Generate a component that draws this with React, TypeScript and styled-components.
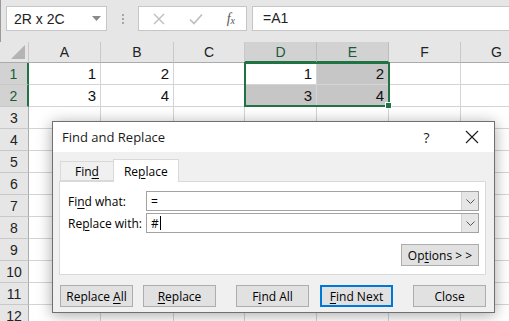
import React from 'react';
import styled, {createGlobalStyle} from 'styled-components';

const columns = ['A', 'B', 'C', 'D', 'E', 'F', 'G'];
const colWidths = [29, 72, 73, 71, 72, 72, 72, 72];
const rows = 12;

const values: Record<string, string> = {
    A1: '1', B1: '2', D1: '1', E1: '2',
    A2: '3', B2: '4', D2: '3', E2: '4',
};

const selectedCols = ['D', 'E'];
const selectedRows = [1, 2];

const GlobalStyle = createGlobalStyle`
  html, body {
    margin: 0;
    padding: 0;
    overflow: hidden;
    background: #ffffff;
  }
`;

const Uline = styled.span`
  text-decoration: underline;
  text-underline-offset: 2px;
`;

// label with one access-key letter underlined
const ul = (text: string, index: number) => (
    <span>
        {text.slice(0, index)}
        <Uline>{text[index]}</Uline>
        {text.slice(index + 1)}
    </span>
);

const ChevronDown = () => (
    <svg width="9" height="5" viewBox="0 0 9 5">
        <path d="M0.5 0.5 L4.5 4.5 L8.5 0.5" stroke="#555" fill="none"/>
    </svg>
);

export default function App() {
    return (
        <Screen>
            <GlobalStyle/>
            <FormulaBar>
                <NameBox>
                    <span>2R x 2C</span>
                    <svg width="9" height="5" viewBox="0 0 9 5">
                        <path d="M0 0 H9 L4.5 5 Z" fill="#8a8a8a"/>
                    </svg>
                </NameBox>
                <Grip>
                    <i/><i/><i/>
                </Grip>
                <FxBox>
                    <svg width="12" height="12" viewBox="0 0 12 12">
                        <path d="M1 1 L11 11 M11 1 L1 11" stroke="#bdbdbd" strokeWidth="1.4"/>
                    </svg>
                    <svg width="14" height="12" viewBox="0 0 14 12">
                        <path d="M1 6.5 L5 10.5 L13 1.5" stroke="#bdbdbd" strokeWidth="1.6" fill="none"/>
                    </svg>
                    <FxText>f<sub>x</sub></FxText>
                </FxBox>
                <FormulaInput>=A1</FormulaInput>
            </FormulaBar>

            <Sheet>
                <Corner>
                    <svg width="14" height="14" viewBox="0 0 14 14">
                        <path d="M14 0 V14 H0 Z" fill="#b4b4b4"/>
                    </svg>
                </Corner>
                {columns.map(c => (
                    <ColHeader key={c} $selected={selectedCols.includes(c)}>{c}</ColHeader>
                ))}
                {Array.from({length: rows}, (_, i) => i + 1).map(r => (
                    <React.Fragment key={r}>
                        <RowHeader $selected={selectedRows.includes(r)}>{r}</RowHeader>
                        {columns.map(c => {
                            const id = c + r;
                            const inRange = selectedCols.includes(c) && selectedRows.includes(r);
                            return (
                                <Cell key={id} $shaded={inRange && id !== 'D1'}>
                                    {values[id]}
                                </Cell>
                            );
                        })}
                    </React.Fragment>
                ))}
                <Selection>
                    <FillHandle/>
                </Selection>
            </Sheet>

            <Dialog>
                <TitleBar>
                    <Title>Find and Replace</Title>
                    <TitleButton>?</TitleButton>
                    <TitleButton>
                        <svg width="14" height="14" viewBox="0 0 14 14">
                            <path d="M1 1 L13 13 M13 1 L1 13" stroke="#1a1a1a" strokeWidth="1.1"/>
                        </svg>
                    </TitleButton>
                </TitleBar>
                <DialogBody>
                    <Tabs>
                        <Tab>{ul('Find', 3)}</Tab>
                        <Tab $active>{ul('Replace', 2)}</Tab>
                    </Tabs>
                    <Panel>
                        <FieldRow>
                            <Label>{ul('Find what:', 2)}</Label>
                            <Combo>
                                <ComboText>=</ComboText>
                                <ComboArrow><ChevronDown/></ComboArrow>
                            </Combo>
                        </FieldRow>
                        <FieldRow>
                            <Label>{ul('Replace with:', 2)}</Label>
                            <Combo>
                                <ComboText>#<Caret/></ComboText>
                                <ComboArrow><ChevronDown/></ComboArrow>
                            </Combo>
                        </FieldRow>
                        <OptionsRow>
                            <DlgButton $width={78}>{ul('Options > >', 2)}</DlgButton>
                        </OptionsRow>
                    </Panel>
                    <ButtonRow>
                        <DlgButton>{ul('Replace All', 8)}</DlgButton>
                        <DlgButton $gap={10}>{ul('Replace', 0)}</DlgButton>
                        <DlgButton $gap={20}>{ul('Find All', 1)}</DlgButton>
                        <DlgButton $gap={11} $default>{ul('Find Next', 0)}</DlgButton>
                        <DlgButton $gap={20}>Close</DlgButton>
                    </ButtonRow>
                </DialogBody>
            </Dialog>
        </Screen>
    );
}

const Screen = styled.div`
  position: relative;
  width: 509px;
  height: 321px;
  overflow: hidden;
  background: #ffffff;
  font-family: "Liberation Sans", Arial, sans-serif;
`;

const FormulaBar = styled.div`
  display: flex;
  align-items: flex-start;
  height: 42px;
  box-sizing: border-box;
  padding: 6px 0 0 6px;
  background: #e6e6e6;
  border-left: 1px solid #9a9a9a;
`;

const NameBox = styled.div`
  display: flex;
  align-items: center;
  justify-content: space-between;
  width: 101px;
  height: 25px;
  box-sizing: border-box;
  padding: 0 5px 0 7px;
  background: #ffffff;
  border: 1px solid #c6c6c6;
  font-size: 14px;
  color: #222;
  margin-left: -1px;
`;

const Grip = styled.div`
  display: flex;
  flex-direction: column;
  gap: 2px;
  width: 31px;
  align-items: center;
  padding-top: 8px;

  i {
    width: 2px;
    height: 2px;
    background: #a6a6a6;
  }
`;

const FxBox = styled.div`
  display: flex;
  align-items: center;
  justify-content: space-between;
  width: 109px;
  height: 25px;
  box-sizing: border-box;
  padding: 0 11px 0 14px;
  background: #ffffff;
  border: 1px solid #c6c6c6;
`;

const FxText = styled.span`
  font-family: "Liberation Serif", "Times New Roman", serif;
  font-style: italic;
  font-size: 14px;
  color: #555;

  sub {
    font-size: 10px;
    vertical-align: -1px;
  }
`;

const FormulaInput = styled.div`
  flex: 1;
  height: 25px;
  box-sizing: border-box;
  margin-left: 5px;
  padding: 3px 0 0 10px;
  background: #ffffff;
  border: 1px solid #c6c6c6;
  border-right: none;
  font-size: 14px;
  color: #222;
`;

const Sheet = styled.div`
  position: relative;
  display: grid;
  grid-template-columns: ${colWidths.map(w => w + 'px').join(' ')};
  grid-template-rows: 21px repeat(${rows}, 22px);
`;

const Corner = styled.div`
  display: flex;
  align-items: flex-end;
  justify-content: flex-end;
  padding: 0 3px 3px 0;
  background: #e6e6e6;
  border-right: 1px solid #c8c8c8;
  border-bottom: 1px solid #ababab;
`;

const ColHeader = styled.div<{ $selected?: boolean }>`
  display: flex;
  align-items: center;
  justify-content: center;
  box-sizing: border-box;
  background: ${p => (p.$selected ? '#d2d2d2' : '#e6e6e6')};
  color: ${p => (p.$selected ? '#185c37' : '#222')};
  border-right: 1px solid ${p => (p.$selected ? '#bdbdbd' : '#c8c8c8')};
  border-bottom: ${p => (p.$selected ? '2px solid #217346' : '1px solid #ababab')};
  font-size: 14px;
`;

const RowHeader = styled.div<{ $selected?: boolean }>`
  display: flex;
  align-items: center;
  justify-content: center;
  box-sizing: border-box;
  background: ${p => (p.$selected ? '#d2d2d2' : '#e6e6e6')};
  color: ${p => (p.$selected ? '#185c37' : '#222')};
  border-right: ${p => (p.$selected ? '2px solid #217346' : '1px solid #ababab')};
  border-bottom: 1px solid #c8c8c8;
  font-size: 14px;
`;

const Cell = styled.div<{ $shaded?: boolean }>`
  display: flex;
  align-items: center;
  justify-content: flex-end;
  box-sizing: border-box;
  padding-right: 4px;
  background: ${p => (p.$shaded ? '#c6c6c6' : '#ffffff')};
  border-right: 1px solid #d4d4d4;
  border-bottom: 1px solid #d4d4d4;
  font-size: 15px;
  color: #111;
`;

const Selection = styled.div`
  position: absolute;
  left: 244px;
  top: 20px;
  width: 146px;
  height: 45px;
  border: 2px solid #217346;
  box-sizing: border-box;
  pointer-events: none;
`;

const FillHandle = styled.div`
  position: absolute;
  right: -4px;
  bottom: -4px;
  width: 5px;
  height: 5px;
  background: #217346;
  border: 1px solid #ffffff;
`;

const Dialog = styled.div`
  position: absolute;
  left: 52px;
  top: 121px;
  width: 443px;
  height: 192px;
  box-sizing: border-box;
  border: 1px solid #707070;
  background: #f0f0f0;
  box-shadow: 0 2px 14px rgba(0, 0, 0, 0.35);
  font-family: "Open Sans", "Noto Sans", sans-serif;
  font-size: 12px;
  color: #000;
  display: flex;
  flex-direction: column;
`;

const TitleBar = styled.div`
  display: flex;
  align-items: center;
  height: 30px;
  background: #ffffff;
  padding-left: 9px;
`;

const Title = styled.div`
  flex: 1;
  font-size: 13px;
  color: #1a1a1a;
`;

const TitleButton = styled.div`
  width: 45px;
  display: flex;
  justify-content: center;
  font-size: 14px;
  color: #1a1a1a;
`;

const DialogBody = styled.div`
  flex: 1;
  padding: 7px 8px 0 6px;
`;

const Tabs = styled.div`
  display: flex;
  align-items: flex-end;
  height: 22px;
  padding-left: 1px;
`;

const Tab = styled.div<{ $active?: boolean }>`
  display: flex;
  align-items: center;
  justify-content: center;
  box-sizing: border-box;
  height: ${p => (p.$active ? '23px' : '20px')};
  padding: 0 ${p => (p.$active ? '10px' : '14px')};
  margin-bottom: ${p => (p.$active ? '-1px' : '0')};
  background: ${p => (p.$active ? '#ffffff' : '#f0f0f0')};
  border: 1px solid #d9d9d9;
  border-bottom: ${p => (p.$active ? 'none' : '1px solid #d9d9d9')};
  border-right: ${p => (p.$active ? '1px solid #d9d9d9' : 'none')};
  position: relative;
  z-index: ${p => (p.$active ? 1 : 0)};
`;

const Panel = styled.div`
  height: 94px;
  box-sizing: border-box;
  background: #ffffff;
  border: 1px solid #d9d9d9;
  padding: 9px 6px 0 8px;
  display: flex;
  flex-direction: column;
  gap: 2px;
`;

const FieldRow = styled.div`
  display: flex;
  align-items: center;
`;

const Label = styled.div`
  width: 78px;
`;

const Combo = styled.div`
  flex: 1;
  display: flex;
  height: 20px;
  box-sizing: border-box;
  border: 1px solid #a2a2a2;
  background: #ffffff;
`;

const ComboText = styled.div`
  flex: 1;
  display: flex;
  align-items: center;
  padding-left: 4px;
`;

const Caret = styled.span`
  display: inline-block;
  width: 1px;
  height: 14px;
  background: #000;
  margin-left: 1px;
`;

const ComboArrow = styled.div`
  width: 16px;
  display: flex;
  align-items: center;
  justify-content: center;
  background: #e6e6e6;
  border-left: 1px solid #cfcfcf;
`;

const OptionsRow = styled.div`
  display: flex;
  justify-content: flex-end;
  margin-top: 9px;
`;

const ButtonRow = styled.div`
  display: flex;
  padding: 10px 0 0 1px;
`;

const DlgButton = styled.div<{ $width?: number; $gap?: number; $default?: boolean }>`
  display: flex;
  align-items: center;
  justify-content: center;
  width: ${p => p.$width ?? 74}px;
  height: 22px;
  box-sizing: border-box;
  margin-left: ${p => p.$gap ?? 0}px;
  background: #e1e1e1;
  border: ${p => (p.$default ? '2px solid #0078d7' : '1px solid #adadad')};
  color: #000;
`;
